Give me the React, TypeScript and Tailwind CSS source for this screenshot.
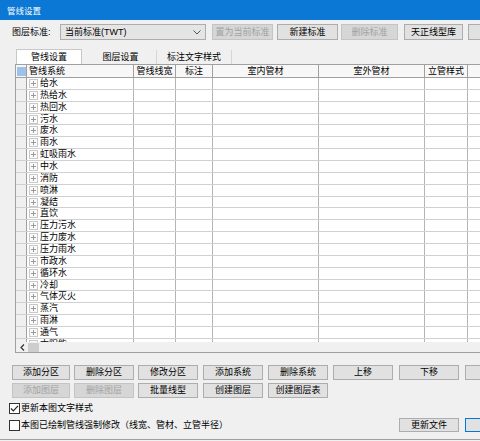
import React from "react";

const systems = [
  "给水", "热给水", "热回水", "污水", "废水", "雨水", "虹吸雨水", "中水",
  "消防", "喷淋", "凝结", "直饮", "压力污水", "压力废水", "压力雨水", "市政水",
  "循环水", "冷却", "气体灭火", "蒸汽", "雨淋", "通气", "太阳能",
];

const columns = [
  { label: "管线系统", w: "w-[107px]", head: "justify-start pl-[2px]" },
  { label: "管线线宽", w: "w-[42px]", head: "justify-center" },
  { label: "标注", w: "w-[37px]", head: "justify-center" },
  { label: "室内管材", w: "w-[106px]", head: "justify-center" },
  { label: "室外管材", w: "w-[106px]", head: "justify-center" },
  { label: "立管样式", w: "w-[43px]", head: "justify-center" },
  { label: "", w: "w-[60px]", head: "justify-center" },
];

function Btn({
  children,
  className = "",
  disabled = false,
  primary = false,
}: {
  children?: React.ReactNode;
  className?: string;
  disabled?: boolean;
  primary?: boolean;
}) {
  const tone = disabled
    ? "bg-[#d6d6d6] border-[#c4c4c4] text-[#a2a2a2]"
    : primary
    ? "bg-[#e1e1e1] border-[#0078d7] text-black"
    : "bg-[#e1e1e1] border-[#adadad] text-black";
  return (
    <div
      className={`shrink-0 border flex items-center justify-center whitespace-nowrap overflow-hidden ${tone} ${className}`}
    >
      {children}
    </div>
  );
}

function PlusBox() {
  return (
    <svg width="9" height="9" viewBox="0 0 9 9" className="shrink-0">
      <rect x="0.5" y="0.5" width="8" height="8" fill="#fafafa" stroke="#c8c8c8" />
      <path d="M2 4.5h5M4.5 2v5" stroke="#9a9a9a" strokeWidth="1" />
    </svg>
  );
}

function CheckBox({ checked }: { checked?: boolean }) {
  return (
    <div className="w-[11px] h-[11px] border border-[#333333] bg-white flex items-center justify-center shrink-0">
      {checked && (
        <svg width="9" height="9" viewBox="0 0 9 9">
          <path d="M1 4.5l2.3 2.3L8 1.8" fill="none" stroke="#222" strokeWidth="1.2" />
        </svg>
      )}
    </div>
  );
}

export default function App() {
  return (
    <div
      className="w-[480px] h-[441px] overflow-hidden bg-[#f0f0f0] text-[9px] leading-none text-black flex flex-col whitespace-nowrap"
      style={{ fontFamily: "'Liberation Sans', 'Noto Sans CJK SC', sans-serif" }}
    >
      {/* title bar */}
      <div className="h-[20px] shrink-0 bg-[#0a78d4] text-white text-[8.5px] pl-[7px] pt-[3px] flex items-center">
        管线设置
      </div>

      {/* layer standard row */}
      <div className="mt-[4px] h-[16px] flex items-center shrink-0">
        <div className="ml-[12px] w-[48px] shrink-0">图层标准:</div>
        <div className="w-[146px] h-[16px] shrink-0 bg-[#e5e5e5] border border-[#adadad] flex items-center pl-[4px] pr-[4px] justify-between">
          <span>当前标准(TWT)</span>
          <svg width="8" height="5" viewBox="0 0 8 5">
            <path d="M0.5 0.5L4 4L7.5 0.5" fill="none" stroke="#555" strokeWidth="1" />
          </svg>
        </div>
        <Btn disabled className="ml-[6px] w-[61px] h-[16px]">置为当前标准</Btn>
        <Btn className="ml-[4px] w-[61px] h-[16px]">新建标准</Btn>
        <Btn disabled className="ml-[3px] w-[57px] h-[16px]">删除标准</Btn>
        <Btn className="ml-[6px] w-[59px] h-[16px]">天正线型库</Btn>
        <Btn className="ml-[5px] w-[60px] h-[16px]" />
      </div>

      {/* tabs */}
      <div className="mt-[7px] h-[17px] flex items-end shrink-0 pl-[16px]">
        <div className="w-[66px] h-[15px] bg-white border border-b-0 border-[#c8c8c8] flex items-center justify-center">
          管线设置
        </div>
        <div className="ml-[3px] w-[72px] h-[14px] border-r border-[#d6d6d6] flex items-center justify-center">
          图层设置
        </div>
        <div className="w-[75px] h-[14px] border-r border-[#d6d6d6] flex items-center justify-center">
          标注文字样式
        </div>
      </div>

      {/* grid */}
      <div className="ml-[15px] w-[600px] h-[289px] shrink-0 border border-[#a0a0a0] bg-white flex flex-col overflow-hidden">
        <div className="h-[13px] shrink-0 flex border-b border-[#a0a0a0] bg-[#f7f7f7]">
          <div className="w-[11px] shrink-0 border-r border-[#a0a0a0] flex items-center justify-center">
            <div className="w-[9px] h-[9px] bg-[#9dc1e8]" />
          </div>
          {columns.map((c, i) => (
            <div
              key={i}
              className={`${c.w} shrink-0 border-r border-[#a0a0a0] flex items-center ${c.head} overflow-hidden`}
            >
              {c.label}
            </div>
          ))}
        </div>
        <div className="flex-1 overflow-hidden">
          {systems.map((s) => (
            <div key={s} className="h-[11.86px] flex border-b border-[#d0d0d0]">
              <div className="w-[11px] shrink-0 border-r border-[#a0a0a0] bg-[#f0f0f0]" />
              {columns.map((c, i) => (
                <div
                  key={i}
                  className={`${c.w} shrink-0 border-r border-[#b4b4b4] flex items-center overflow-hidden`}
                >
                  {i === 0 && (
                    <>
                      <span className="ml-[2px]">
                        <PlusBox />
                      </span>
                      <span className="ml-[2px]">{s}</span>
                    </>
                  )}
                </div>
              ))}
            </div>
          ))}
        </div>
        <div className="h-[10px] shrink-0 bg-[#f0f0f0] flex items-center">
          <div className="w-[12px] h-full flex items-center justify-center">
            <svg width="5" height="7" viewBox="0 0 5 7">
              <path d="M4 0.5L1 3.5L4 6.5" fill="none" stroke="#333" strokeWidth="1.2" />
            </svg>
          </div>
          <div className="w-[11px] h-[9px] bg-[#cdcdcd]" />
        </div>
      </div>

      {/* action buttons */}
      <div className="mt-[12px] h-[15px] flex shrink-0">
        <Btn className="ml-[12px] w-[58px] h-[15px]">添加分区</Btn>
        <Btn className="ml-[4px] w-[60px] h-[15px]">删除分区</Btn>
        <Btn className="ml-[4px] w-[60px] h-[15px]">修改分区</Btn>
        <Btn className="ml-[5px] w-[60px] h-[15px]">添加系统</Btn>
        <Btn className="ml-[5px] w-[60px] h-[15px]">删除系统</Btn>
        <Btn className="ml-[5px] w-[60px] h-[15px]">上移</Btn>
        <Btn className="ml-[6px] w-[60px] h-[15px]">下移</Btn>
        <Btn className="ml-[6px] w-[60px] h-[15px]" />
      </div>
      <div className="mt-[3px] h-[15px] flex shrink-0">
        <Btn disabled className="ml-[12px] w-[58px] h-[15px]">添加图层</Btn>
        <Btn disabled className="ml-[4px] w-[60px] h-[15px]">删除图层</Btn>
        <Btn className="ml-[4px] w-[60px] h-[15px]">批量线型</Btn>
        <Btn className="ml-[5px] w-[60px] h-[15px]">创建图层</Btn>
        <Btn className="ml-[5px] w-[60px] h-[15px]">创建图层表</Btn>
      </div>

      {/* options */}
      <div className="mt-[4px] h-[12px] flex items-center shrink-0 pl-[9px]">
        <CheckBox checked />
        <span className="ml-[1px]">更新本图文字样式</span>
      </div>
      <div className="mt-[4px] h-[14px] flex items-center shrink-0 pl-[9px]">
        <CheckBox />
        <span className="ml-[1px] w-[378px] shrink-0">本图已绘制管线强制修改（线宽、管材、立管半径）</span>
        <Btn className="w-[60px] h-[14px]">更新文件</Btn>
        <Btn primary className="ml-[6px] w-[60px] h-[14px]" />
      </div>
      <div className="mt-[7px] border-t border-[#a0a0a0] flex-1" />
    </div>
  );
}
